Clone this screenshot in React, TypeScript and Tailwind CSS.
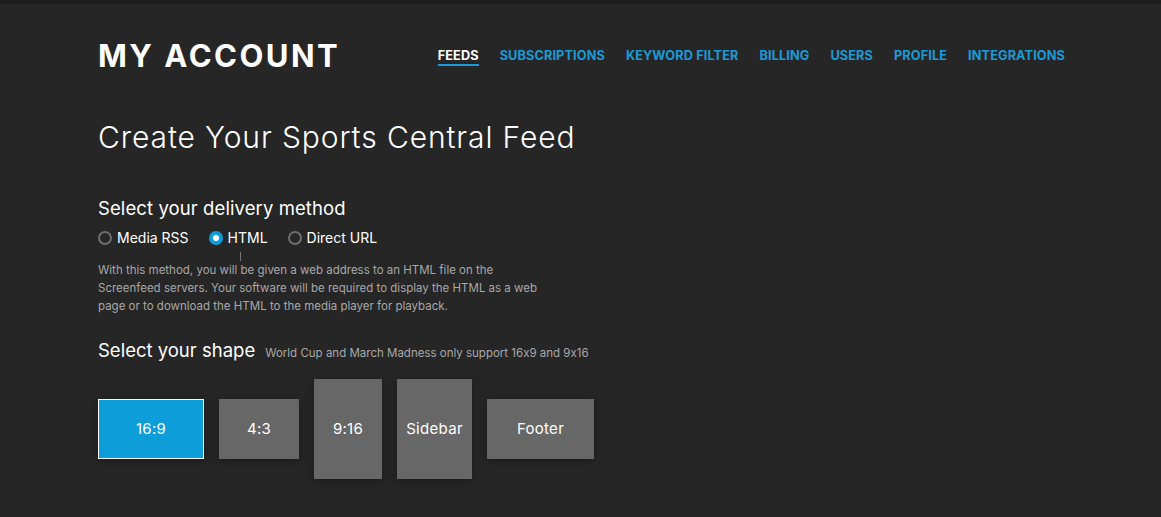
import { useState } from "react";

const navItems = ["FEEDS", "SUBSCRIPTIONS", "KEYWORD FILTER", "BILLING", "USERS", "PROFILE", "INTEGRATIONS"];
const methods = ["Media RSS", "HTML", "Direct URL"];

const App = () => {
  const [method, setMethod] = useState("HTML");
  const [shape, setShape] = useState("16:9");

  const shapes = [
    { name: "16:9", cls: "w-[106px] h-[60px]" },
    { name: "4:3", cls: "w-[80px] h-[60px]" },
    { name: "9:16", cls: "w-[68px] h-[100px]" },
    { name: "Sidebar", cls: "w-[75px] h-[100px]" },
    { name: "Footer", cls: "w-[107px] h-[60px]" },
  ];

  return (
    <div className="min-h-screen bg-[#262626] border-t-4 border-[#1c1c1c] text-white font-['Inter',sans-serif] [font-feature-settings:'calt'_0]">
      <div className="pl-[98px] pr-[96px]">
        {/* Header */}
        <div className="flex items-center justify-between pt-[34px]">
          <h1 className="text-[31px] leading-[36px] font-bold tracking-[0.08em]">MY ACCOUNT</h1>
          <nav className="flex gap-[21px] text-[12.7px] font-bold tracking-[0.01em] mt-[2px]">
            {navItems.map((item, i) => (
              <a
                key={item}
                className={
                  i === 0
                    ? "text-white border-b-2 border-[#1a9bd7] pb-[1px] leading-[15px]"
                    : "text-[#1a9bd7] pb-[3px] leading-[15px]"
                }
              >
                {item}
              </a>
            ))}
          </nav>
        </div>

        <h2 className="mt-[45px] text-[30px] leading-[36px] font-light tracking-[0.03em]">Create Your Sports Central Feed</h2>

        {/* Delivery method */}
        <h3 className="mt-[41px] text-[18.5px] leading-[24px] font-normal tracking-[0.005em]">Select your delivery method</h3>
        <div className="flex items-center gap-[20px] mt-[7px] text-[14px]">
          {methods.map((m) => (
            <label key={m} className="flex items-center gap-[5px] cursor-pointer" onClick={() => setMethod(m)}>
              {method === m ? (
                <span className="w-[14px] h-[14px] rounded-full bg-[#0d9dd9] flex items-center justify-center">
                  <span className="w-[6px] h-[6px] rounded-full bg-white" />
                </span>
              ) : (
                <span className="w-[14px] h-[14px] rounded-full border-2 border-[#6e6e6e]" />
              )}
              {m}
            </label>
          ))}
        </div>
        <div className="ml-[142px] mt-[4px] w-px h-[9px] bg-[#777]" />
        <p className="text-[11.5px] leading-[18px] text-[#a8a8a8] w-[455px]">
          With this method, you will be given a web address to an HTML file on the Screenfeed servers. Your software
          will be required to display the HTML as a web page or to download the HTML to the media player for playback.
        </p>

        {/* Shape */}
        <div className="flex items-baseline gap-[10px] mt-[23px]">
          <h3 className="text-[18.5px] leading-[24px] font-normal">Select your shape</h3>
          <span className="text-[11.5px] text-[#a8a8a8]">World Cup and March Madness only support 16x9 and 9x16</span>
        </div>
        <div className="flex items-center gap-[15px] mt-[17px]">
          {shapes.map((s) => (
            <button
              key={s.name}
              onClick={() => setShape(s.name)}
              className={`${s.cls} flex items-center justify-center text-[15px] tracking-[0.02em] shadow-[0_2px_8px_rgba(0,0,0,0.35)] ${
                shape === s.name ? "bg-[#0d9dd9] border border-white" : "bg-[#676767]"
              }`}
            >
              {s.name}
            </button>
          ))}
        </div>
      </div>
    </div>
  );
};

export default App;
